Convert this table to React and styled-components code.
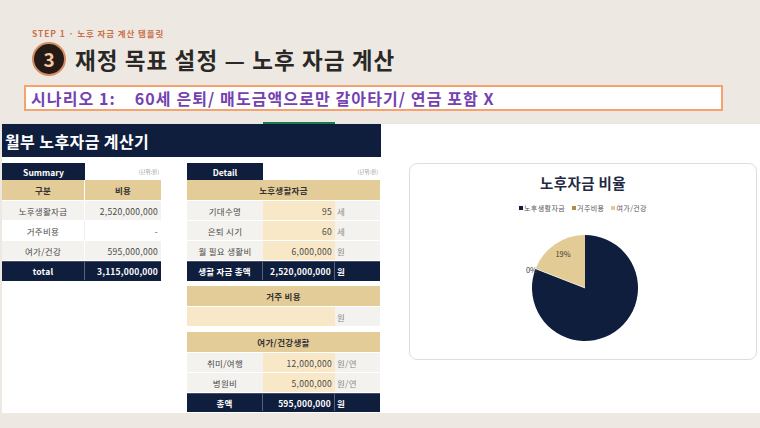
import React from "react";
import styled, { createGlobalStyle } from "styled-components";

const KR = `"Noto Sans CJK KR", "Noto Sans", sans-serif`;

const Global = createGlobalStyle`
  html, body { margin: 0; padding: 0; background: #EEE8E2; }
  body { font-family: ${KR}; }
  * { box-sizing: border-box; }
`;

const Page = styled.div`
  width: 760px;
  height: 428px;
  overflow: hidden;
  background: #EEE8E2;
  display: flex;
  flex-direction: column;
`;

const Header = styled.header`
  padding: 27px 0 0 32px;
  display: flex;
  flex-direction: column;
`;

const Step = styled.div`
  font-size: 8.5px;
  line-height: 12px;
  font-weight: 700;
  color: #C9704A;
  letter-spacing: 0.9px;
`;

const TitleRow = styled.div`
  margin-top: 4px;
  height: 32px;
  display: flex;
  align-items: center;
  gap: 9px;
`;

const NumberBadge = styled.div`
  width: 34px;
  height: 34px;
  border-radius: 50%;
  background: #241a16;
  border: 2px solid #d58a62;
  color: #F5C7A3;
  font-size: 19px;
  font-weight: 700;
  display: flex;
  align-items: center;
  justify-content: center;
  line-height: 1;
  padding-bottom: 1px;
`;

const Title = styled.h1`
  margin: 0;
  font-size: 22.5px;
  font-weight: 700;
  color: #2A2826;
  letter-spacing: 1.1px;
  line-height: 32px;
`;

const Scenario = styled.div`
  margin: 10px 0 0 24px;
  width: 699px;
  height: 26px;
  border: 2px solid #F5A26F;
  background: #fff;
  display: flex;
  align-items: center;
  padding-left: 5px;
  font-size: 16px;
  font-weight: 700;
  color: #7442B0;
  white-space: pre;
  letter-spacing: 1.1px;
`;

const Sheet = styled.section`
  margin: 12px 0 0 2px;
  height: 290px;
  background: #fff;
  display: flex;
  flex-direction: column;
`;

const GridStrip = styled.div`
  height: 1px;
  display: flex;
  background: #e6e6e6;
`;

const CellHighlight = styled.div`
  margin-left: 261px;
  width: 72px;
  height: 2px;
  margin-top: -1px;
  background: #1f7a4a;
`;

const TitleBar = styled.div`
  width: 379px;
  height: 33px;
  background: #0F1E3D;
  color: #fff;
  font-size: 16px;
  font-weight: 700;
  display: flex;
  align-items: center;
  padding-left: 3px;
  letter-spacing: 0.4px;
`;

const Body = styled.div`
  margin-top: 6px;
  display: flex;
  align-items: flex-start;
`;

const Block = styled.div`
  display: flex;
  flex-direction: column;
  width: ${(p) => p.$w}px;
  margin-left: ${(p) => p.$ml || 0}px;
`;

const TabRow = styled.div`
  height: 17px;
  display: flex;
  align-items: center;
  justify-content: space-between;
`;

const Tab = styled.div`
  width: ${(p) => p.$w}px;
  height: 17px;
  background: #0F1E3D;
  color: #fff;
  font-size: 8.5px;
  font-weight: 700;
  display: flex;
  align-items: center;
  justify-content: center;
`;

const UnitNote = styled.span`
  font-size: 5.5px;
  color: #9a9a9a;
  padding-right: 2px;
  margin-top: 1px;
`;

const Row = styled.div`
  display: grid;
  grid-template-columns: ${(p) => p.$cols};
  height: ${(p) => p.$h || 20}px;
  border-bottom: 1px solid ${(p) => (p.$dark ? "#0F1E3D" : "#ffffff")};
  border-top: ${(p) => (p.$dark ? "1px solid #4a5068" : "none")};
`;

const Cell = styled.div`
  background: ${(p) => p.$bg || "#fff"};
  color: ${(p) => p.$color || "#4a4a4a"};
  font-size: ${(p) => p.$size || 8.5}px;
  font-weight: ${(p) => (p.$bold ? 700 : 400)};
  letter-spacing: ${(p) => (p.$bold ? 0.2 : 0.3)}px;
  display: flex;
  align-items: center;
  justify-content: ${(p) =>
    p.$align === "right" ? "flex-end" : p.$align === "left" ? "flex-start" : "center"};
  padding: 0 ${(p) => (p.$align === "right" ? 3 : 0)}px 0 ${(p) => (p.$align === "left" ? 2 : 0)}px;
  grid-column: ${(p) => p.$span || "auto"};
  border-right: ${(p) => (p.$sep ? `1px solid ${p.$sep}` : "none")};
  white-space: nowrap;
  overflow: hidden;
`;

const HeaderBand = styled.div`
  height: 21px;
  background: #E4CC98;
  color: #333;
  font-size: 8.5px;
  font-weight: 700;
  letter-spacing: 0.3px;
  display: flex;
  align-items: center;
  justify-content: center;
  border-bottom: 1px solid #fff;
`;

const Spacer = styled.div`
  height: 5px;
`;

const Card = styled.div`
  margin-left: 29px;
  width: 348px;
  height: 197px;
  border: 1px solid #DEDEDE;
  border-radius: 8px;
  background: #fff;
  display: flex;
  flex-direction: column;
  align-items: center;
  padding-top: 9px;
`;

const ChartTitle = styled.div`
  height: 20px;
  line-height: 20px;
  font-size: 14.5px;
  font-weight: 700;
  color: #1F2A44;
  letter-spacing: 0.4px;
`;

const Legend = styled.div`
  margin-top: 10px;
  height: 10px;
  display: flex;
  align-items: center;
  gap: 7px;
  font-size: 7px;
  color: #555;
  letter-spacing: 0.4px;
`;

const LegendItem = styled.span`
  display: flex;
  align-items: center;
  gap: 1px;
`;

const Swatch = styled.span`
  width: 4px;
  height: 4px;
  background: ${(p) => p.$c};
  display: inline-block;
`;

const NAVY = "#0F1E3D";
const TAN = "#E4CC98";
const PEACH = "#F8E8C8";
const GRAY = "#F4F2EE";

const sCols = "83px 76px";
const dCols = "76px 72px 45px";

function PieChart() {
  const cx = 175;
  const cy = 75;
  const r = 53;
  const frac = 2520 / 3115;
  const a = -Math.PI / 2 + frac * 2 * Math.PI;
  const ex = cx + r * Math.cos(a);
  const ey = cy + r * Math.sin(a);
  return (
    <svg width="346" height="136" viewBox="0 0 346 136">
      <path d={`M${cx},${cy} L${cx},${cy - r} A${r},${r} 0 1 1 ${ex},${ey} Z`} fill="#0F1E3D" />
      <path d={`M${cx},${cy} L${ex},${ey} A${r},${r} 0 0 1 ${cx},${cy - r} Z`} fill="#E3CB96" />
      <line x1={cx} y1={cy} x2={ex} y2={ey} stroke="#fff" strokeWidth="0.6" />
      <text x="153" y="44" fontSize="7.5" fill="#3a3a3a" textAnchor="middle" fontFamily={KR}>19%</text>
      <text x="127" y="60" fontSize="7.5" fill="#3a3a3a" textAnchor="end" fontFamily={KR}>0%</text>
      <text x="198" y="110" fontSize="7.5" fill="#1a2030" textAnchor="middle" fontFamily={KR}>81%</text>
    </svg>
  );
}

export default function App() {
  return (
    <Page>
      <Global />
      <Header>
        <Step>STEP 1 · 노후 자금 계산 템플릿</Step>
        <TitleRow>
          <NumberBadge>3</NumberBadge>
          <Title>재정 목표 설정 — 노후 자금 계산</Title>
        </TitleRow>
      </Header>
      <Scenario>{"시나리오 1:    60세 은퇴/ 매도금액으로만 갈아타기/ 연금 포함 X"}</Scenario>
      <Sheet>
        <GridStrip>
          <CellHighlight />
        </GridStrip>
        <TitleBar>월부 노후자금 계산기</TitleBar>
        <Body>
          <Block $w={159}>
            <TabRow>
              <Tab $w={83}>Summary</Tab>
              <UnitNote>(단위:원)</UnitNote>
            </TabRow>
            <Row $cols={sCols} $h={21}>
              <Cell $bg={TAN} $bold $color="#333" $sep="#fff">구분</Cell>
              <Cell $bg={TAN} $bold $color="#333">비용</Cell>
            </Row>
            <Row $cols={sCols}>
              <Cell $bg={GRAY} $sep="#fff">노후생활자금</Cell>
              <Cell $bg={GRAY} $align="right">2,520,000,000</Cell>
            </Row>
            <Row $cols={sCols}>
              <Cell $bg="#fff" $sep="#f0f0f0">거주비용</Cell>
              <Cell $bg="#fff" $align="right">-</Cell>
            </Row>
            <Row $cols={sCols}>
              <Cell $bg={GRAY} $sep="#fff">여가/건강</Cell>
              <Cell $bg={GRAY} $align="right">595,000,000</Cell>
            </Row>
            <Row $cols={sCols} $dark>
              <Cell $bg={NAVY} $bold $color="#fff" $sep="#5a6278">total</Cell>
              <Cell $bg={NAVY} $bold $color="#fff" $align="right">3,115,000,000</Cell>
            </Row>
          </Block>

          <Block $w={193} $ml={26}>
            <TabRow>
              <Tab $w={76}>Detail</Tab>
              <UnitNote>(단위:원)</UnitNote>
            </TabRow>
            <HeaderBand>노후생활자금</HeaderBand>
            <Row $cols={dCols}>
              <Cell $bg={GRAY}>기대수명</Cell>
              <Cell $bg={PEACH} $align="right">95</Cell>
              <Cell $bg={GRAY} $align="left" $color="#8a8a8a">세</Cell>
            </Row>
            <Row $cols={dCols}>
              <Cell $bg={GRAY}>은퇴 시기</Cell>
              <Cell $bg={PEACH} $align="right">60</Cell>
              <Cell $bg={GRAY} $align="left" $color="#8a8a8a">세</Cell>
            </Row>
            <Row $cols={dCols}>
              <Cell $bg={GRAY}>월 필요 생활비</Cell>
              <Cell $bg={PEACH} $align="right">6,000,000</Cell>
              <Cell $bg={GRAY} $align="left" $color="#8a8a8a">원</Cell>
            </Row>
            <Row $cols={dCols} $dark>
              <Cell $bg={NAVY} $bold $color="#fff" $sep="#5a6278">생활 자금 총액</Cell>
              <Cell $bg={NAVY} $bold $color="#fff" $align="right" $sep="#5a6278">2,520,000,000</Cell>
              <Cell $bg={NAVY} $bold $color="#fff" $align="left">원</Cell>
            </Row>
            <Spacer />
            <HeaderBand>거주 비용</HeaderBand>
            <Row $cols={dCols}>
              <Cell $bg={PEACH} $span="1 / span 2" />
              <Cell $bg={GRAY} $align="left" $color="#8a8a8a">원</Cell>
            </Row>
            <Spacer />
            <HeaderBand>여가/건강생활</HeaderBand>
            <Row $cols={dCols}>
              <Cell $bg={GRAY}>취미/여행</Cell>
              <Cell $bg={PEACH} $align="right">12,000,000</Cell>
              <Cell $bg={GRAY} $align="left" $color="#8a8a8a">원/연</Cell>
            </Row>
            <Row $cols={dCols}>
              <Cell $bg={GRAY}>병원비</Cell>
              <Cell $bg={PEACH} $align="right">5,000,000</Cell>
              <Cell $bg={GRAY} $align="left" $color="#8a8a8a">원/연</Cell>
            </Row>
            <Row $cols={dCols} $dark $h={19}>
              <Cell $bg={NAVY} $bold $color="#fff" $sep="#5a6278">총액</Cell>
              <Cell $bg={NAVY} $bold $color="#fff" $align="right" $sep="#5a6278">595,000,000</Cell>
              <Cell $bg={NAVY} $bold $color="#fff" $align="left">원</Cell>
            </Row>
          </Block>

          <Card>
            <ChartTitle>노후자금 비율</ChartTitle>
            <Legend>
              <LegendItem><Swatch $c="#0F1E3D" />노후생활자금</LegendItem>
              <LegendItem><Swatch $c="#B08A4A" />거주비용</LegendItem>
              <LegendItem><Swatch $c="#E3CB96" />여가/건강</LegendItem>
            </Legend>
            <PieChart />
          </Card>
        </Body>
      </Sheet>
    </Page>
  );
}
